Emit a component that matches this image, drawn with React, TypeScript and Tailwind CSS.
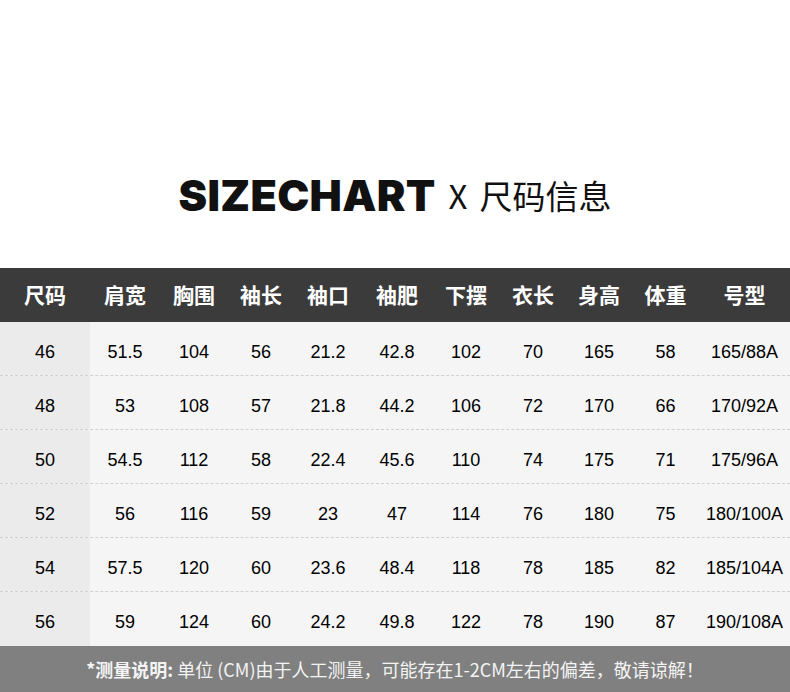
import React from 'react';

const cols = ['尺码', '肩宽', '胸围', '袖长', '袖口', '袖肥', '下摆', '衣长', '身高', '体重', '号型'];

const rows = [
  ['46', '51.5', '104', '56', '21.2', '42.8', '102', '70', '165', '58', '165/88A'],
  ['48', '53', '108', '57', '21.8', '44.2', '106', '72', '170', '66', '170/92A'],
  ['50', '54.5', '112', '58', '22.4', '45.6', '110', '74', '175', '71', '175/96A'],
  ['52', '56', '116', '59', '23', '47', '114', '76', '180', '75', '180/100A'],
  ['54', '57.5', '120', '60', '23.6', '48.4', '118', '78', '185', '82', '185/104A'],
  ['56', '59', '124', '60', '24.2', '49.8', '122', '78', '190', '87', '190/108A'],
];

const grid = 'grid grid-cols-[90px_70px_68px_66px_68px_70px_68px_66px_66px_67px_91px]';

export default function App() {
  return (
    <div className="w-[790px] h-[692px] bg-white flex flex-col overflow-hidden">
      {/* Title */}
      <div className="h-[268px] flex justify-center pt-[170px]">
        <h1 className="flex items-center h-[50px] text-[#111]">
          <span className="font-['Inter'] font-black text-[43px] leading-none tracking-[0.3px]">SIZECHART</span>
          <span className="ml-[13px] font-['Noto_Sans_CJK_SC',sans-serif] font-normal text-[33px] leading-none">X</span>
          <span className="ml-[12px] font-['Noto_Sans_CJK_SC',sans-serif] font-normal text-[33px] leading-none">尺码信息</span>
        </h1>
      </div>

      {/* Header row */}
      <div className={`${grid} h-[54px] bg-[#3b3b3b] text-white font-['Noto_Sans_CJK_SC',sans-serif] font-bold text-[21px] items-center`}>
        {cols.map((c) => (
          <div key={c} className="text-center">{c}</div>
        ))}
      </div>

      {/* Data rows */}
      <div className="bg-[#f5f5f5] font-['Liberation_Sans',sans-serif] text-[18px] text-black">
        {rows.map((r, i) => (
          <div
            key={r[0]}
            className={`${grid} h-[54px] items-stretch ${i < rows.length - 1 ? 'border-b border-dashed border-[#cfcfcf]' : ''}`}
          >
            {r.map((v, j) => (
              <div key={j} className={`flex items-center justify-center pt-[7px] ${j === 0 ? 'bg-[#ebebeb]' : ''}`}>
                {v}
              </div>
            ))}
          </div>
        ))}
      </div>

      {/* Footer note */}
      <div className="flex-1 bg-[#808080] flex items-center justify-center text-[#f4f4f4] font-['Noto_Sans_CJK_SC',sans-serif] text-[18px]">
        <span className="font-bold">*测量说明:</span>
        <span className="ml-[4px]">单位 (CM)由于人工测量，可能存在1-2CM左右的偏差，敬请谅解！</span>
      </div>
    </div>
  );
}
